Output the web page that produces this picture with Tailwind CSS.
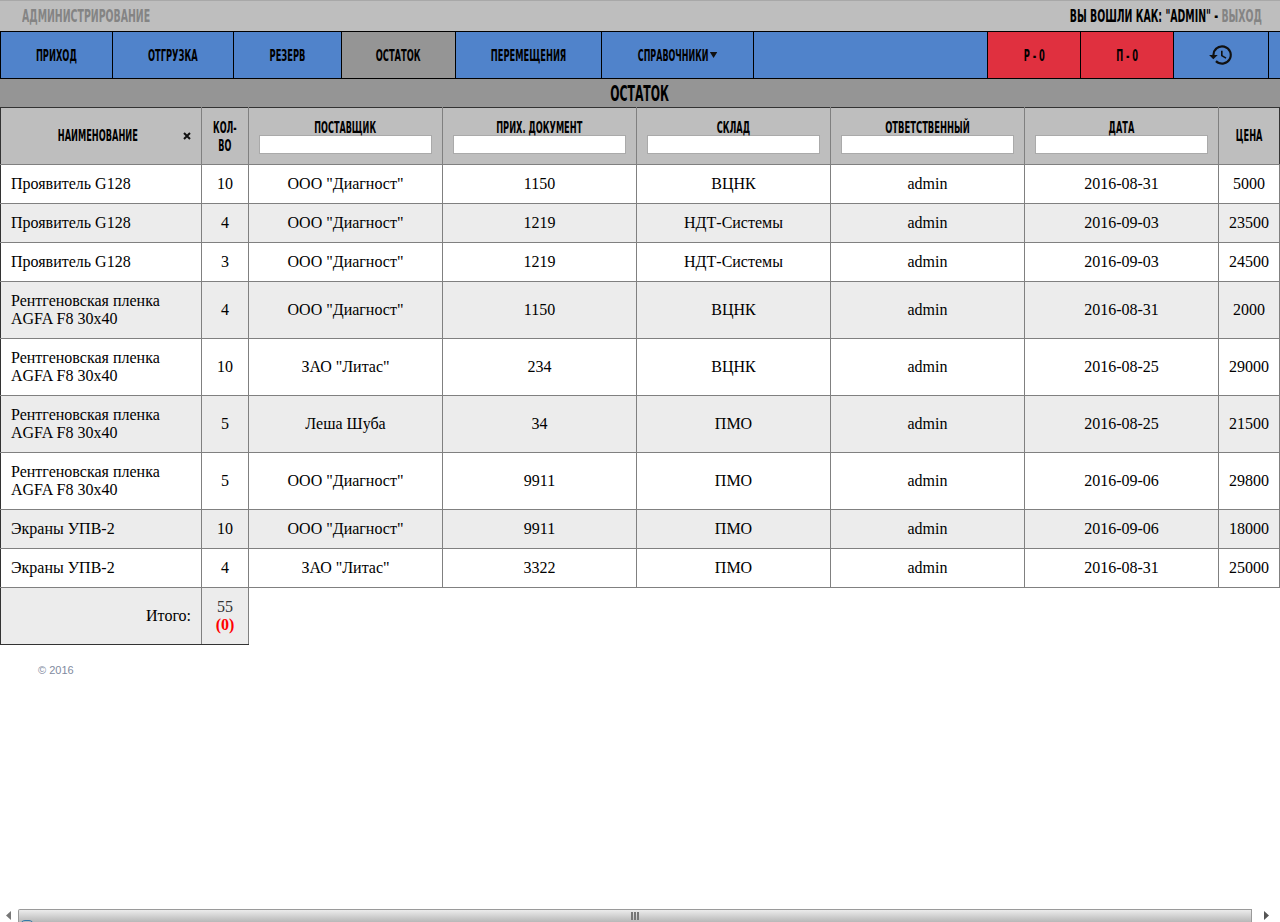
<!DOCTYPE html>
<html lang="ru">
<head>
  <meta charset="UTF-8">
  <meta name="viewport" content="width=device-width, initial-scale=1">
  <title>Остаток</title>
  <script src="https://cdn.jsdelivr.net/npm/@tailwindcss/browser@4"></script>
</head>
<body class="relative h-[922px] overflow-hidden bg-white font-['Liberation_Serif',serif] text-[16px] leading-[18px] text-black">

  <!-- верхняя полоса -->
  <div class="flex h-[31px] items-center justify-between border-t border-[#a8a8a8] bg-[#bebebe] pl-[22px] pr-[18px] font-['DejaVu_Sans',sans-serif] text-[18px] font-bold uppercase">
    <div class="origin-left scale-x-[.522] whitespace-nowrap text-[#848484]">Администрирование</div>
    <div class="origin-right scale-x-[.522] whitespace-nowrap">Вы вошли как: "admin" - <a href="#" class="text-[#848484]">Выход</a></div>
  </div>

  <!-- меню -->
  <nav class="flex h-[48px] border-y border-l border-black bg-[#5083cb] font-['DejaVu_Sans',sans-serif] text-[16px] font-bold uppercase">
    <a href="#" class="flex w-[112px] items-center justify-center border-r border-black pt-px"><span class="scale-x-[.52] whitespace-nowrap">Приход</span></a>
    <a href="#" class="flex w-[121px] items-center justify-center border-r border-black pt-px"><span class="scale-x-[.52] whitespace-nowrap">Отгрузка</span></a>
    <a href="#" class="flex w-[108px] items-center justify-center border-r border-black pt-px"><span class="scale-x-[.52] whitespace-nowrap">Резерв</span></a>
    <a href="#" class="flex w-[114px] items-center justify-center border-r border-black bg-[#959595] pt-px"><span class="scale-x-[.52] whitespace-nowrap">Остаток</span></a>
    <a href="#" class="flex w-[146px] items-center justify-center border-r border-black pt-px"><span class="scale-x-[.52] whitespace-nowrap">Перемещения</span></a>
    <a href="#" class="flex w-[152px] items-center justify-center border-r border-black pt-px"><span class="scale-x-[.5] whitespace-nowrap">Справочники<svg class="ml-[3px] inline-block align-[3px]" width="15" height="6" viewBox="0 0 15 6"><path d="M0 0h15L7.5 6z" fill="#111"/></svg></span></a>
    <div class="w-[234px] border-r border-black"></div>
    <a href="#" class="flex w-[93px] items-center justify-center border-r border-black bg-[#e0303f] pt-px"><span class="scale-x-[.52] whitespace-nowrap">Р - 0</span></a>
    <a href="#" class="flex w-[93px] items-center justify-center border-r border-black bg-[#e0303f] pt-px"><span class="scale-x-[.52] whitespace-nowrap">П - 0</span></a>
    <a href="#" class="flex w-[95px] items-center justify-center border-r border-black">
      <svg width="26" height="26" viewBox="0 0 24 24" fill="#111"><path d="M13 3a9 9 0 0 0-9 9H1l3.9 3.9L9 12H6a7 7 0 1 1 2.05 4.95l-1.42 1.42A9 9 0 1 0 13 3zm-1 5v5l4.28 2.54.72-1.21-3.5-2.08V8z"/></svg>
    </a>
  </nav>

  <h1 class="flex h-[28px] items-center justify-center bg-[#959595] pt-px font-['DejaVu_Sans',sans-serif] text-[21px] font-bold uppercase"><span class="scale-x-[.52] whitespace-nowrap">Остаток</span></h1>

  <table class="w-[1279px] table-fixed border-collapse text-center [&_td]:border [&_td]:border-[#808080] [&_th]:border [&_th]:border-[#808080]">
    <colgroup>
      <col class="w-[201px]"><col class="w-[47px]"><col class="w-[194px]"><col class="w-[194px]"><col class="w-[194px]"><col class="w-[194px]"><col class="w-[194px]"><col class="w-[61px]">
    </colgroup>
    <thead class="bg-[#bebebe] font-['DejaVu_Sans',sans-serif] text-[15px] font-bold uppercase leading-[18px]">
      <tr class="h-[57px]">
        <th class="relative !border-l-[#333] !border-t-[#333] pr-[7px]"><span class="inline-block scale-x-[.55] whitespace-nowrap">Наименование</span><svg class="absolute left-[182px] top-[24px]" width="8" height="8" viewBox="0 0 8 8"><path d="M1 1l6 6M7 1L1 7" stroke="#111" stroke-width="2"/></svg></th>
        <th class="!border-t-[#333] pt-px"><span class="inline-block scale-x-[.54] whitespace-nowrap">Кол-<br>во</span></th>
        <th class="!border-t-[#333] pt-px"><span class="inline-block scale-x-[.54] whitespace-nowrap">Поставщик</span><input class="mx-auto mt-[-2px] block h-[19px] w-[173px] border border-[#aaa] bg-white"></th>
        <th class="!border-t-[#333] pt-px"><span class="inline-block scale-x-[.55] whitespace-nowrap">Прих. документ</span><input class="mx-auto mt-[-2px] block h-[19px] w-[173px] border border-[#aaa] bg-white"></th>
        <th class="!border-t-[#333] pt-px"><span class="inline-block scale-x-[.55] whitespace-nowrap">Склад</span><input class="mx-auto mt-[-2px] block h-[19px] w-[173px] border border-[#aaa] bg-white"></th>
        <th class="!border-t-[#333] pt-px"><span class="inline-block scale-x-[.56] whitespace-nowrap">Ответственный</span><input class="mx-auto mt-[-2px] block h-[19px] w-[173px] border border-[#aaa] bg-white"></th>
        <th class="!border-t-[#333] pt-px"><span class="inline-block scale-x-[.55] whitespace-nowrap">Дата</span><input class="mx-auto mt-[-2px] block h-[19px] w-[173px] border border-[#aaa] bg-white"></th>
        <th class="!border-t-[#333] !border-r-[#333]"><span class="inline-block scale-x-[.55] whitespace-nowrap">Цена</span></th>
      </tr>
    </thead>
    <tbody class="[&_td:first-child]:border-l-[#333] [&_td:first-child]:pl-[10px] [&_td:first-child]:text-left [&_tr:nth-child(even)]:bg-[#ececec]">
      <tr class="h-[39px]"><td>Проявитель G128</td><td>10</td><td>ООО "Диагност"</td><td>1150</td><td>ВЦНК</td><td>admin</td><td>2016-08-31</td><td>5000</td></tr>
      <tr class="h-[39px]"><td>Проявитель G128</td><td>4</td><td>ООО "Диагност"</td><td>1219</td><td>НДТ-Системы</td><td>admin</td><td>2016-09-03</td><td>23500</td></tr>
      <tr class="h-[39px]"><td>Проявитель G128</td><td>3</td><td>ООО "Диагност"</td><td>1219</td><td>НДТ-Системы</td><td>admin</td><td>2016-09-03</td><td>24500</td></tr>
      <tr class="h-[57px]"><td>Рентгеновская пленка<br>AGFA F8 30х40</td><td>4</td><td>ООО "Диагност"</td><td>1150</td><td>ВЦНК</td><td>admin</td><td>2016-08-31</td><td>2000</td></tr>
      <tr class="h-[57px]"><td>Рентгеновская пленка<br>AGFA F8 30х40</td><td>10</td><td>ЗАО "Литас"</td><td>234</td><td>ВЦНК</td><td>admin</td><td>2016-08-25</td><td>29000</td></tr>
      <tr class="h-[57px]"><td>Рентгеновская пленка<br>AGFA F8 30х40</td><td>5</td><td>Леша Шуба</td><td>34</td><td>ПМО</td><td>admin</td><td>2016-08-25</td><td>21500</td></tr>
      <tr class="h-[57px]"><td>Рентгеновская пленка<br>AGFA F8 30х40</td><td>5</td><td>ООО "Диагност"</td><td>9911</td><td>ПМО</td><td>admin</td><td>2016-09-06</td><td>29800</td></tr>
      <tr class="h-[39px]"><td>Экраны УПВ-2</td><td>10</td><td>ООО "Диагност"</td><td>9911</td><td>ПМО</td><td>admin</td><td>2016-09-06</td><td>18000</td></tr>
      <tr class="h-[39px]"><td>Экраны УПВ-2</td><td>4</td><td>ЗАО "Литас"</td><td>3322</td><td>ПМО</td><td>admin</td><td>2016-08-31</td><td>25000</td></tr>
    </tbody>
    <tfoot>
      <tr class="h-[57px]">
        <td class="!border-b-[#333] !border-l-[#333] bg-[#ececec] pr-[10px] text-right">Итого:</td>
        <td class="!border-b-[#333] bg-[#ececec] text-[#333]">55<br><b class="text-[#ff0000]">(0)</b></td>
        <td colspan="6" class="!border-0 bg-white"></td>
      </tr>
    </tfoot>
  </table>

  <footer class="pl-[38px] pt-[18px] font-['Liberation_Sans',sans-serif] text-[11px] leading-[14px] text-[#7f8aa0]">© 2016</footer>

  <!-- горизонтальная полоса прокрутки -->
  <div class="absolute inset-x-0 bottom-0 flex h-[13px] items-start bg-white">
    <div class="flex h-[13px] w-[18px] items-center justify-center"><svg width="6" height="9" viewBox="0 0 6 9"><path d="M5 0v9L0 4.5z" fill="#777"/></svg></div>
    <div class="relative flex h-[13px] flex-1 items-center justify-center overflow-hidden rounded-tl-[2px] border-x border-t border-[#9a9a9a] bg-gradient-to-b from-[#ececec] to-[#b8b8b8]">
      <svg width="9" height="8" viewBox="0 0 9 8"><path d="M1 0v8M4 0v8M7 0v8" stroke="#777" stroke-width="2"/></svg>
      <div class="absolute left-[1px] top-[10px] h-[10px] w-[14px] rounded-full border border-[#3478a8]"></div>
    </div>
    <div class="flex h-[13px] w-[28px] items-center justify-center"><svg width="6" height="9" viewBox="0 0 6 9"><path d="M1 0v9l5-4.5z" fill="#555"/></svg></div>
  </div>
</body>
</html>
